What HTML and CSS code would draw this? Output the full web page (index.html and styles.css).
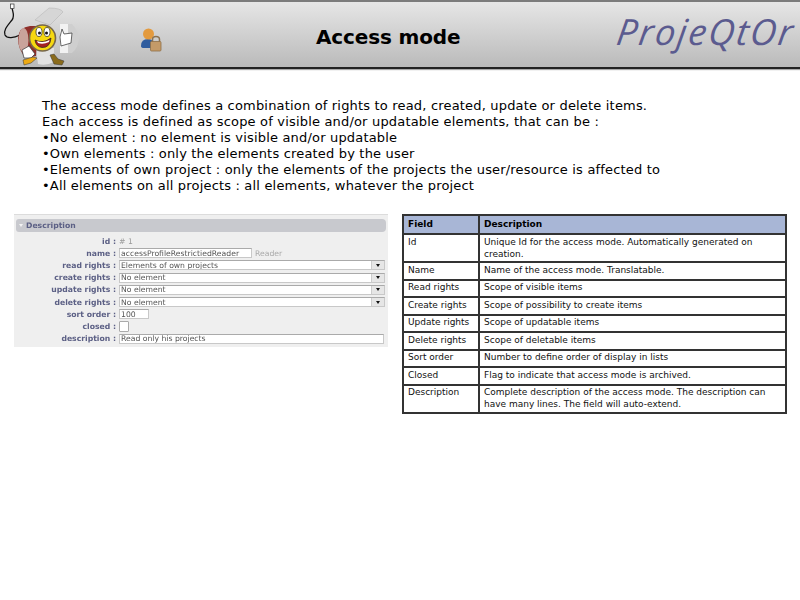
FILE: index.html
```html
<!DOCTYPE html>
<html lang="en">
<head>
<meta charset="utf-8">
<title>Access mode</title>
<link rel="stylesheet" href="styles.css">
</head>
<body>
<header class="header">
  <div class="logo-zone">
    <svg class="logo" width="82" height="65" viewBox="0 2 82 65">
      <path d="M12 8 C13 13 15 16 12 20 C8 25 3 30 5 35 C7 39 14 38 20 35" fill="none" stroke="#111" stroke-width="1.3"/>
      <rect x="10.500" y="4" width="3.500" height="4.500" fill="#fff" stroke="#333" stroke-width=".7"/>
      <path d="M35 20 L49 8 Q61 8 63 12 L50 25 Z" fill="#d6d6d6" stroke="#b0b0b0" stroke-width=".5"/>
      <path d="M60 24 L72 24 Q79 32 79 39 Q78 48 72 53 L60 53 Z" fill="#cfcfcf"/>
      <path d="M60 24 L68 24 L68 53 L60 53 Z" fill="#f2f2f2"/>
      <path d="M36 48 L54 48 L54 62 Q46 66 38 64 Z" fill="#e2e2e2"/>
      <path d="M18 38 Q19 27 30 26 L38 26 L36 56 L26 58 Q18 50 18 38 Z" fill="#8f2f2a"/>
      <ellipse cx="23.500" cy="40" rx="5" ry="12" fill="#c9a39b"/>
      <circle cx="42.500" cy="38" r="13" fill="#f6d810" stroke="#77674a" stroke-width="1.600"/>
      <ellipse cx="39" cy="32" rx="3" ry="4.500" fill="#fff" stroke="#222" stroke-width=".7"/>
      <ellipse cx="47" cy="32" rx="3" ry="4.500" fill="#fff" stroke="#222" stroke-width=".7"/>
      <circle cx="39.500" cy="33" r="1.500" fill="#111"/>
      <circle cx="46.500" cy="33" r="1.500" fill="#111"/>
      <path d="M35 40 Q43 44 51 38 Q50 48 42 47.500 Q36 47 35 40 Z" fill="#a52222" stroke="#222" stroke-width=".7"/>
      <path d="M37 41 Q43 43.500 49.500 40 L49 42 Q43 45 38 43 Z" fill="#fff"/>
      <path d="M22 50 L29 46 L35 54 L31 58 L24 58 Z" fill="#fff" stroke="#333" stroke-width=".7"/>
      <path d="M23 60 L33 57 L37 58 L31 63 L24 65 Z" fill="#eda912" stroke="#333" stroke-width=".5"/>
      <path d="M50 55 L54 54 L58 59 L64 61 L62 65 L54 64 Z" fill="#8a6b1c" stroke="#333" stroke-width=".5"/>
      <path d="M60 37 L62 29 L64 34 L72 33 L71 43 L61 46 Z" fill="#fff" stroke="#444" stroke-width=".8"/>
    </svg>
    <svg class="access-icon" width="21" height="24" viewBox="0 0 21 24">
      <path d="M0 18 Q0 11 7 11 Q11 11 12 14 L12 20 L3 20 Q0 20 0 18 Z" fill="#2f5c9e"/>
      <circle cx="7.500" cy="6" r="5.500" fill="#e39a3e"/>
      <path d="M11.500 14 V11.500 Q11.500 8.500 15 8.500 Q18.500 8.500 18.500 11.500 V14" fill="none" stroke="#8a7150" stroke-width="1.500"/>
      <rect x="9.500" y="13.500" width="10.500" height="9.500" rx="1" fill="#c49a68" stroke="#8f7048" stroke-width=".8"/>
    </svg>
  </div>
  <h1 class="title">Access mode</h1>
  <div class="brand">ProjeQtOr</div>
</header>
<main class="content">
  <div class="intro">
    <p>The access mode defines a combination of rights to read, created, update or delete items.</p>
    <p>Each access is defined as scope of visible and/or updatable elements, that can be :</p>
    <p>•No element : no element is visible and/or updatable</p>
    <p>•Own elements : only the elements created by the user</p>
    <p>•Elements of own project : only the elements of the projects the user/resource is affected to</p>
    <p>•All elements on all projects : all elements, whatever the project</p>
  </div>
  <div class="columns">
    <section class="panel">
      <div class="panel-head"><span class="caret"></span>Description</div>
      <div class="form">
        <div class="row row-id"><span class="lbl">id :</span><span class="idval"># 1</span></div>
        <div class="row"><span class="lbl">name :</span><span class="field field-name">accessProfileRestrictiedReader</span><span class="muted">Reader</span></div>
        <div class="row"><span class="lbl">read rights :</span><span class="field field-select"><span class="val">Elements of own projects</span><span class="arrow"></span></span></div>
        <div class="row"><span class="lbl">create rights :</span><span class="field field-select"><span class="val">No element</span><span class="arrow"></span></span></div>
        <div class="row"><span class="lbl">update rights :</span><span class="field field-select"><span class="val">No element</span><span class="arrow"></span></span></div>
        <div class="row"><span class="lbl">delete rights :</span><span class="field field-select"><span class="val">No element</span><span class="arrow"></span></span></div>
        <div class="row"><span class="lbl">sort order :</span><span class="field field-sort">100</span></div>
        <div class="row"><span class="lbl">closed :</span><span class="check"></span></div>
        <div class="row"><span class="lbl">description :</span><span class="field field-desc">Read only his projects</span></div>
      </div>
    </section>
    <table class="fields">
      <colgroup><col class="c1"><col class="c2"></colgroup>
      <thead><tr><th>Field</th><th>Description</th></tr></thead>
      <tbody>
        <tr class="two"><td>Id</td><td>Unique Id for the access mode. Automatically generated on creation.</td></tr>
        <tr><td>Name</td><td>Name of the access mode. Translatable.</td></tr>
        <tr><td>Read rights</td><td>Scope of visible items</td></tr>
        <tr><td>Create rights</td><td>Scope of possibility to create items</td></tr>
        <tr><td>Update rights</td><td>Scope of updatable items</td></tr>
        <tr><td>Delete rights</td><td>Scope of deletable items</td></tr>
        <tr><td>Sort order</td><td>Number to define order of display in lists</td></tr>
        <tr><td>Closed</td><td>Flag to indicate that  access mode is archived.</td></tr>
        <tr class="two"><td>Description</td><td>Complete description of the access mode. The description can have many lines. The field will auto-extend.</td></tr>
      </tbody>
    </table>
  </div>
</main>
</body>
</html>
```
FILE: styles.css
```css
* { box-sizing: border-box; }
html, body { margin: 0; padding: 0; background: #fff; }
body { width: 800px; height: 600px; overflow: hidden; font-family: "DejaVu Sans", sans-serif; color: #000; }

.header {
  height: 69px;
  display: flex;
  align-items: center;
  border-top: 2px solid #7c7c7c;
  border-bottom: 2px solid #222;
  background: linear-gradient(#e6e6e6, #bababa);
  box-shadow: 0 1px 1px #aaa;
}
.logo-zone { width: 166px; display: flex; align-items: center; gap: 59px; padding-left: 0; flex: none; }
.logo { flex: none; }
.access-icon { flex: none; margin-top: 11px; }
.title { margin: 5px 0 0 150px; font-size: 20px; font-weight: bold; line-height: 26px; letter-spacing: -.15px; white-space: nowrap; width: 144px; }
.brand {
  margin-left: 157px;
  font-family: "Open Sans", sans-serif;
  font-style: italic;
  font-size: 36px;
  line-height: 40px;
  letter-spacing: 2px;
  color: #5b5b8f;
  white-space: nowrap;
  margin-top: -6px;
  transform: skewX(-8deg);
}

.content { padding: 29px 13px 0 14px; }
.intro { padding-left: 28px; font-size: 13px; line-height: 16px; letter-spacing: .18px; }
.intro p { margin: 0; white-space: nowrap; }

.columns { display: flex; align-items: flex-start; gap: 14px; margin-top: 20px; }

.panel { width: 374px; height: 133px; background: #efefef; border-top: 1px solid #dcdcdc; padding: 4px 2px 0 2px; flex: none; filter: blur(.35px); }
.panel-head {
  height: 13px;
  background: #c8c9ce;
  border-radius: 3px 4px 4px 3px;
  font-size: 7.700px;
  line-height: 13px;
  font-weight: bold;
  color: #5c6085;
  display: flex;
  align-items: center;
  gap: 3px;
  padding-left: 3px;
}
.caret { width: 0; height: 0; border-left: 2.500px solid transparent; border-right: 2.500px solid transparent; border-top: 3px solid #f4f4f4; }
.form { margin-top: 3px; display: flex; flex-direction: column; }
.row { height: 12.200px; display: flex; align-items: center; font-size: 7.700px; }
.lbl { width: 101px; flex: none; text-align: right; font-weight: bold; color: #5c6085; padding-right: 1px; margin-right: 2px; white-space: nowrap; }
.idval { color: #999; }
.field { height: 10px; line-height: 9px; background: #fff; border: 1px solid #c8c8c8; border-top-color: #aaa; color: #555; padding-left: 1px; white-space: nowrap; overflow: hidden; display: flex; align-items: center; }
.field-name { width: 133px; }
.muted { color: #aaa; margin-left: 3px; }
.field-select { width: 266px; justify-content: space-between; padding-right: 0; background: #fff; }
.val { flex: 1; }
.arrow { width: 13px; height: 100%; background: #e6e6e6; border-left: 1px solid #ccc; display: flex; align-items: center; justify-content: center; }
.arrow::before { content: ""; width: 0; height: 0; border-left: 2.500px solid transparent; border-right: 2.500px solid transparent; border-top: 3px solid #111; }
.field-sort { width: 30px; }
.check { width: 10px; height: 11px; background: #fff; border: 1px solid #aaa; border-radius: 1px; }
.field-desc { width: 265px; }

.fields { width: 385px; border-collapse: collapse; table-layout: fixed; font-size: 9px; border: 2px solid #333; line-height: 12px; flex: none; }
.c1 { width: 76px; }
.fields th, .fields td { border: 2px solid #333; padding: 0 4px; text-align: left; vertical-align: top; }
.fields th { background: #a8b6d6; font-weight: bold; height: 19px; padding-top: 2px; }
.fields td { height: 17.500px; padding-top: .5px; padding-bottom: 0; color: #111; }
.fields .two td { height: 28px; }
```
